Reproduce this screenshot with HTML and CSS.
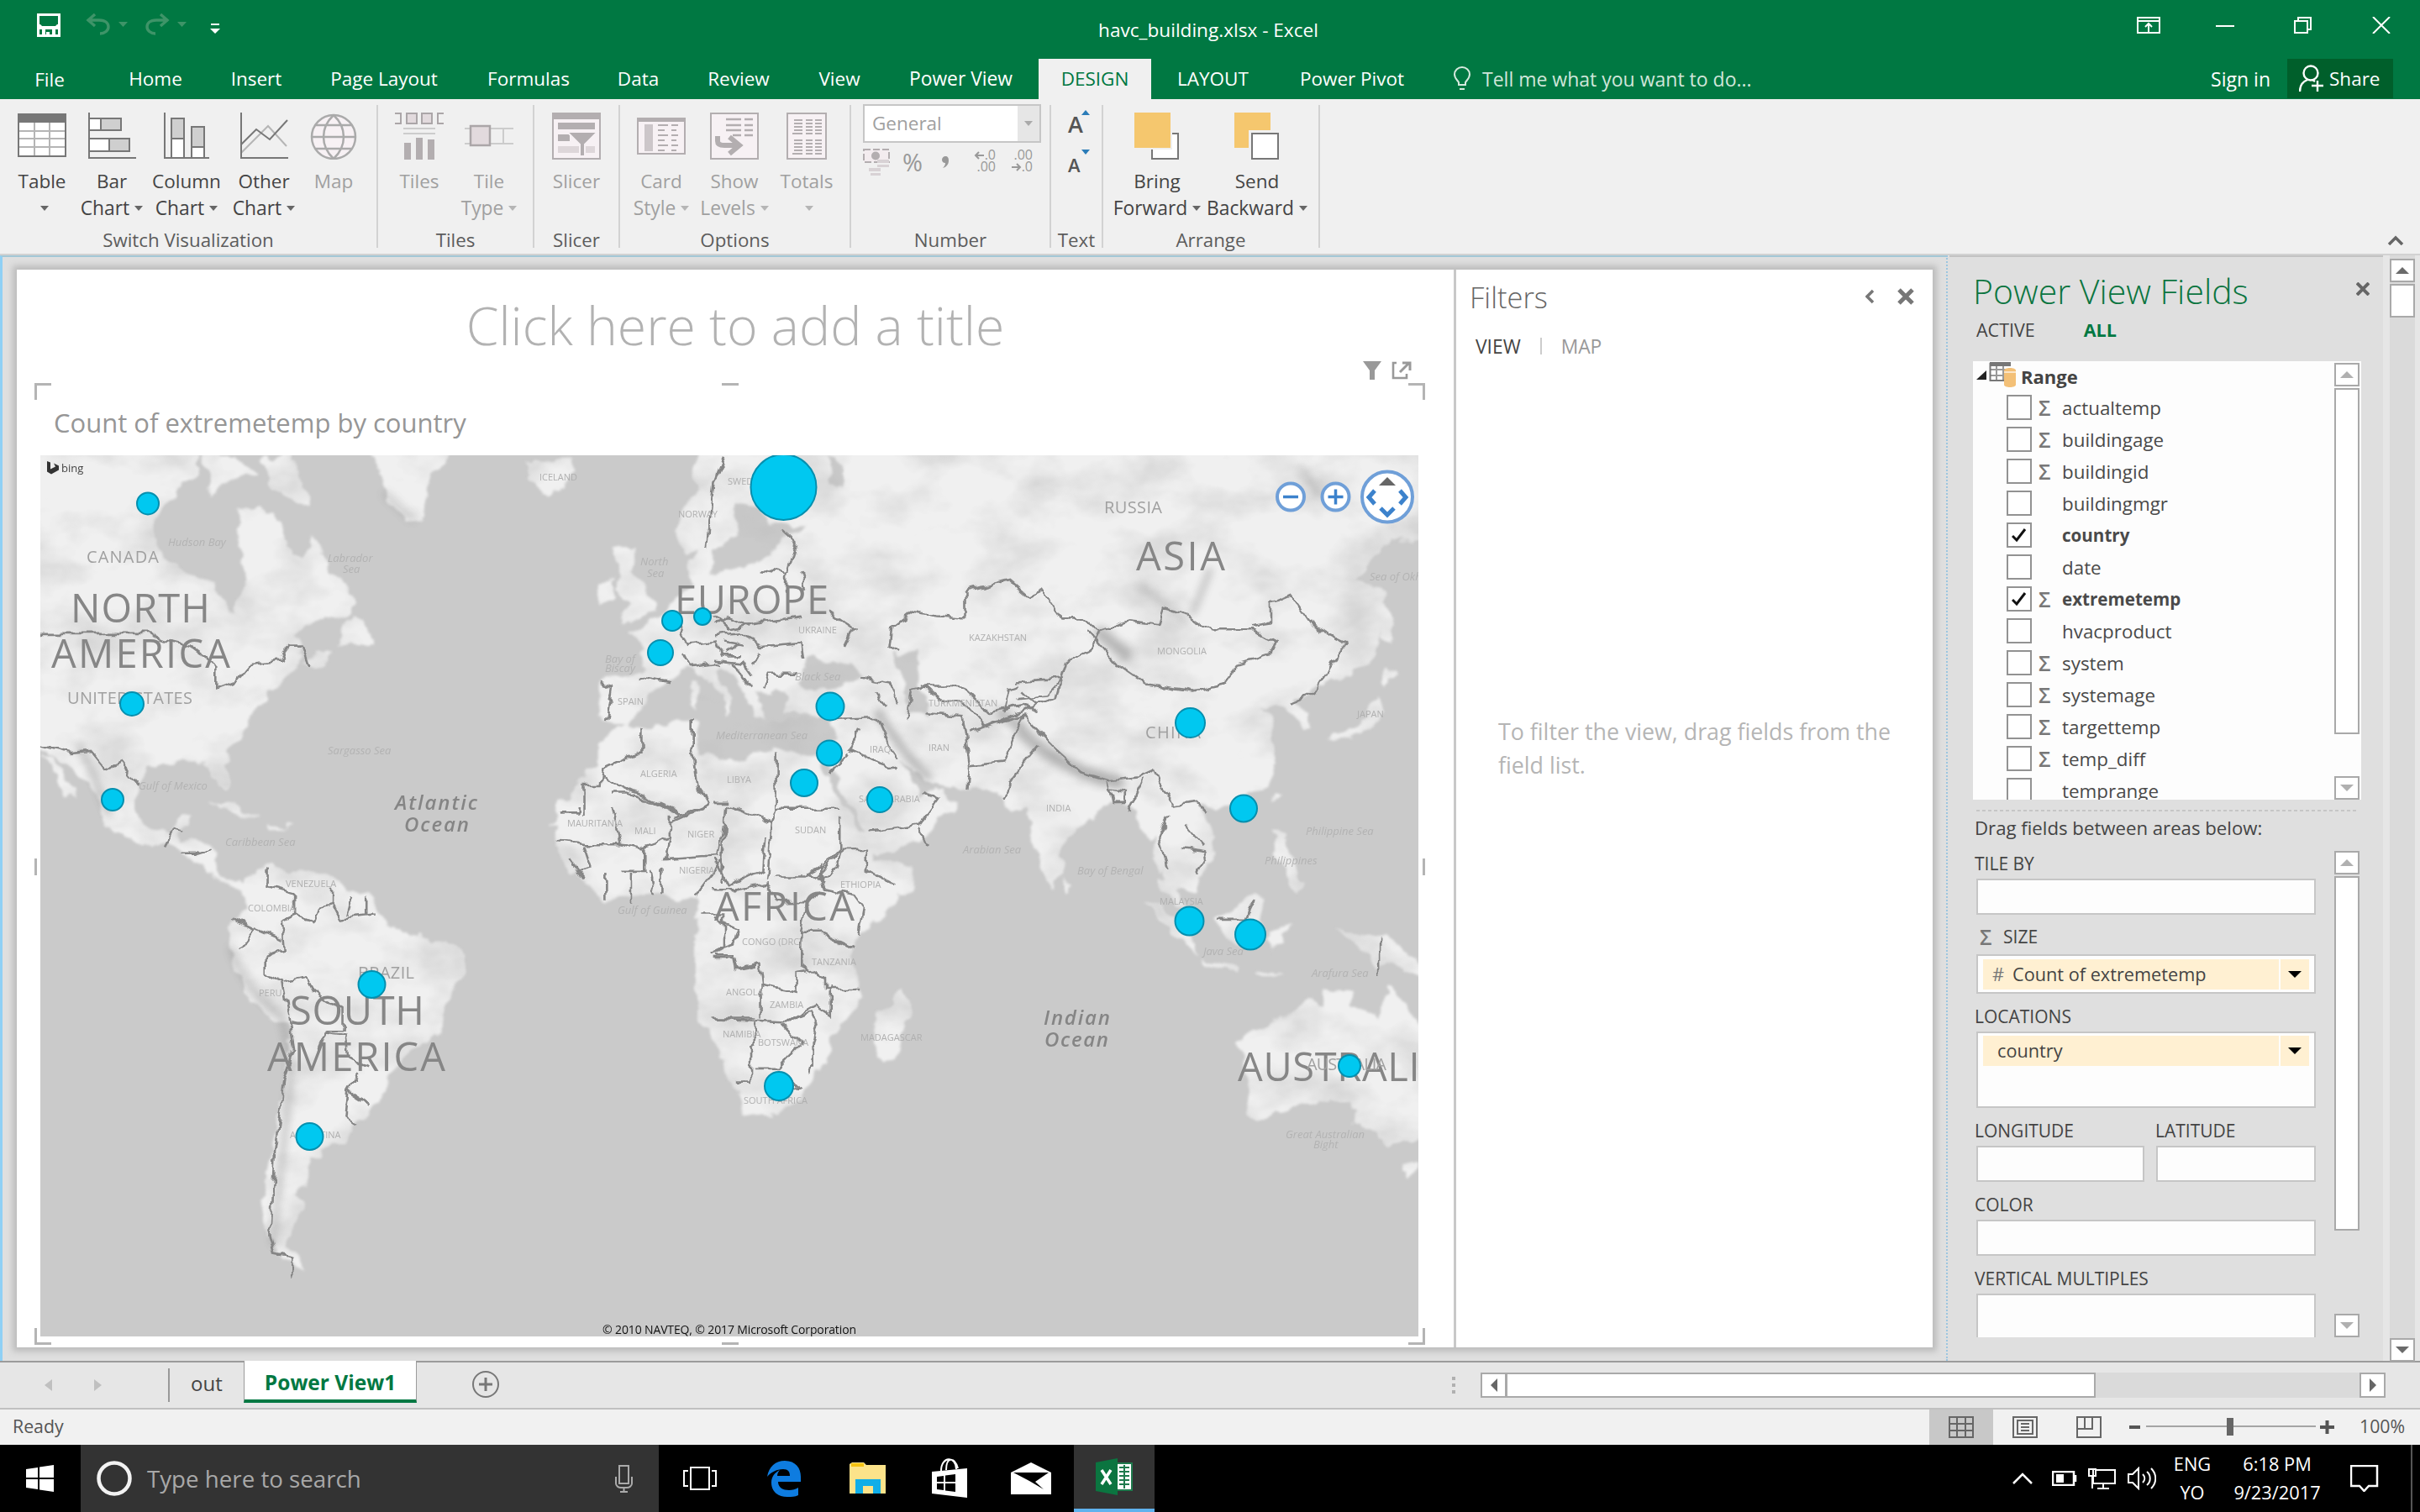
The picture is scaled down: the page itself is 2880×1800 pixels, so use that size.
FILE: index.html
```html
<!DOCTYPE html>
<html lang="en">
<head>
<meta charset="utf-8">
<title>havc_building.xlsx - Excel</title>
<link rel="stylesheet" href="styles.css">
</head>
<body>
<div class="app">
  <header class="titlebar">
    <div class="qat">
      <svg class="i-save" width="28" height="28" viewBox="0 0 28 28"><path d="M1.5 1.5h25v25h-25z" fill="none" stroke="#fff" stroke-width="3"/><path d="M1 13h3l2 2h16l2-2h3v6H1zM6 17h4v9H6zM18 17h4v9h-4zM11 22h4v5h-4z" fill="#fff"/></svg>
      <svg class="i-undo" width="50" height="26" viewBox="0 0 50 26"><path d="M2 8h14c8 0 11 4 11 8s-4 8-10 8M11 1L3 8l8 7" fill="none" stroke="#3e9468" stroke-width="3.4"/><path d="M39 10h11l-5.500 6z" fill="#3e9468"/></svg>
      <svg class="i-redo" width="50" height="26" viewBox="0 0 50 26"><path d="M28 8H14C6 8 3 12 3 16s4 8 10 8M19 1l8 7-8 7" fill="none" stroke="#3e9468" stroke-width="3.4"/><path d="M39 10h11l-5.500 6z" fill="#3e9468"/></svg>
      <svg class="i-more" width="12" height="13" viewBox="0 0 12 13"><path d="M1 0h10v2H1zM0 6h12l-6 6z" fill="#fff"/></svg>
    </div>
    <div class="doc-name">havc_building.xlsx - Excel</div>
    <div class="win-btns">
      <svg class="w-rib" width="28" height="20" viewBox="0 0 28 20"><path d="M1 1h26v18H1zM1 5h26M14 18V8M10 12l4-4 4 4" fill="none" stroke="#fff" stroke-width="2"/></svg>
      <svg width="22" height="20" viewBox="0 0 22 20"><path d="M0 11h22" stroke="#fff" stroke-width="2"/></svg>
      <svg width="22" height="20" viewBox="0 0 22 20"><path d="M1 5h15v14H1zM5 5V1h15v14h-4" fill="none" stroke="#fff" stroke-width="2"/></svg>
      <svg width="22" height="20" viewBox="0 0 22 20"><path d="M1 0l20 20M21 0L1 20" stroke="#fff" stroke-width="2"/></svg>
    </div>
  </header>

  <nav class="tabs">
    <span class="tab file">File</span>
    <span class="tab t-home">Home</span>
    <span class="tab t-insert">Insert</span>
    <span class="tab t-page">Page Layout</span>
    <span class="tab t-form">Formulas</span>
    <span class="tab t-data">Data</span>
    <span class="tab t-rev">Review</span>
    <span class="tab t-view">View</span>
    <span class="tab t-pv">Power View</span>
    <span class="tab active">DESIGN</span>
    <span class="tab t-lay">LAYOUT</span>
    <span class="tab t-pp">Power Pivot</span>
    <span class="tab tell"><svg width="20" height="30" viewBox="0 0 20 30"><path d="M6 22v-3C4 16 1 14 1 9.500a9 8.500 0 0 1 18 0c0 4.500-3 6.500-5 9.500v3zM7 27h6" fill="none" stroke="#d6e9de" stroke-width="2"/></svg>Tell me what you want to do...</span>
    <span class="tab signin">Sign in</span>
    <span class="tab share"><svg width="30" height="34" viewBox="0 0 30 34"><circle cx="14" cy="10" r="8.500" fill="none" stroke="#fff" stroke-width="2.400"/><path d="M1 32c0-8 4-12 9-14M16 18l3 2M22 19v13M15 25h14" fill="none" stroke="#fff" stroke-width="2.400"/></svg>Share</span>
  </nav>

  <section class="ribbon">
    <div class="group g-switch">
      <div class="btns">
        <div class="btn b84"><svg width="58" height="56" viewBox="0 0 58 56"><path d="M1 2h56v50H1z" fill="#fff"/><path d="M1 22h56M1 31h56M1 41h56M20 12v40M38 12v40" stroke="#b5b5b5" stroke-width="2"/><path d="M1 2h56v50H1z" fill="none" stroke="#777" stroke-width="2"/><path d="M0 2h58v10H0z" fill="#777"/></svg><span>Table</span><span><i class="dd"></i></span></div>
        <div class="btn b82"><svg width="58" height="56" viewBox="0 0 58 56"><path d="M2 0v54h56" fill="none" stroke="#777" stroke-width="2"/><path d="M2 7h38v14H2zM2 31h48v15H2z" fill="#fff" stroke="#777" stroke-width="2"/><path d="M16 7h24v14H16zM26 31h24v15H26z" fill="#cfcfcf" stroke="#777" stroke-width="2"/></svg><span>Bar</span><span>Chart<i class="dd"></i></span></div>
        <div class="btn b96"><svg width="54" height="56" viewBox="0 0 54 56"><path d="M1 0v54h53" fill="none" stroke="#777" stroke-width="2"/><path d="M9 7h15v47H9zM33 17h15v37H33z" fill="#fff" stroke="#777" stroke-width="2"/><path d="M9 7h15v24H9zM33 17h15v24H33z" fill="#cfcfcf" stroke="#777" stroke-width="2"/></svg><span>Column</span><span>Chart<i class="dd"></i></span></div>
        <div class="btn b88"><svg width="58" height="56" viewBox="0 0 58 56"><path d="M2 48l32-32 22 24" fill="none" stroke="#b5b5b5" stroke-width="2"/><path d="M2 38l18-18 16 12L57 9M2 0v54h56" fill="none" stroke="#777" stroke-width="2"/></svg><span>Other</span><span>Chart<i class="dd"></i></span></div>
        <div class="btn b78 off"><svg width="56" height="56" viewBox="0 0 56 56"><circle cx="28" cy="29" r="26" fill="#f7f1f4" stroke="#aaa" stroke-width="2.500"/><path d="M2 29h52M7 15h42M7 43h42M28 3c-16 15-16 37 0 52M28 3c16 15 16 37 0 52" fill="none" stroke="#aaa" stroke-width="2.500"/></svg><span>Map</span></div>
      </div>
      <div class="gname">Switch Visualization</div>
    </div>
    <div class="group g-tiles">
      <div class="btns">
        <div class="btn b82 off"><svg width="58" height="56" viewBox="0 0 58 56"><path d="M0 1h7v12H0M58 1h-7v12h7" fill="none" stroke="#aba6a8" stroke-width="2"/><path d="M14 1h12v12H14zM32 1h12v12H32z" fill="#e2dadd" stroke="#aba6a8" stroke-width="2"/><path d="M10 19h38M10 25h38" stroke="#ccc" stroke-width="2"/><path d="M11 36h8v20h-8zM25 30h8v26h-8zM39 32h8v24h-8z" fill="#b3aeb0"/></svg><span>Tiles</span></div>
        <div class="btn b84 off"><svg width="58" height="56" viewBox="0 0 58 56"><path d="M0 19h58M0 37h58M46 19v18" stroke="#ccc" stroke-width="2"/><path d="M7 16h23v23H7z" fill="#e2dadd" stroke="#aba6a8" stroke-width="2.500"/></svg><span>Tile</span><span>Type<i class="dd"></i></span></div>
      </div>
      <div class="gname">Tiles</div>
    </div>
    <div class="group g-slicer">
      <div class="btns">
        <div class="btn b84 off"><svg width="58" height="56" viewBox="0 0 58 56"><path d="M1 1h56v54H1z" fill="#f7f1f4" stroke="#b3aeb0" stroke-width="2"/><path d="M0 0h58v8H0zM7 12h44v8H7zM7 26h14v8H7z" fill="#b3aeb0"/><path d="M7 40h44v8H7z" fill="#ddd6d9"/><path d="M18 23h36L39 38v14h-6V38z" fill="#b3aeb0" stroke="#f7f1f4" stroke-width="2"/></svg><span>Slicer</span></div>
      </div>
      <div class="gname">Slicer</div>
    </div>
    <div class="group g-options">
      <div class="btns">
        <div class="btn b86 off"><svg width="58" height="56" viewBox="0 0 58 56"><path d="M1 7h56v42H1z" fill="#f7f1f4" stroke="#b3aeb0" stroke-width="2"/><path d="M0 6h58v5H0z" fill="#b3aeb0"/><path d="M9 14h10v32H9z" fill="#ccc6c9"/><path d="M25 15h12M41 15h8M25 21h8M41 21h6M25 27h12M41 27h8M25 33h8M41 33h6M25 39h12M41 39h8M25 45h8M41 45h6" stroke="#b3aeb0" stroke-width="2"/></svg><span>Card</span><span>Style<i class="dd"></i></span></div>
        <div class="btn b88 off"><svg width="58" height="56" viewBox="0 0 58 56"><path d="M1 1h56v54H1z" fill="#f7f1f4" stroke="#b3aeb0" stroke-width="2"/><path d="M19 8h18M41 8h10M19 15h18M41 15h10M19 21h18M41 21h10M27 27h10M41 27h10" stroke="#b3aeb0" stroke-width="2.500"/><path d="M9 28v6c0 4 4 5 8 5h18M23 29l12 10-12 10" fill="none" stroke="#b3aeb0" stroke-width="6"/></svg><span>Show</span><span>Levels<i class="dd"></i></span></div>
        <div class="btn b84 off"><svg width="48" height="56" viewBox="0 0 48 56"><path d="M1 1h46v54H1z" fill="#f7f1f4" stroke="#b3aeb0" stroke-width="2"/><path d="M9 9h10M23 9h8M34 9h8M9 13h10M23 13h8M34 13h8M9 17h10M23 17h8M34 17h8M9 21h10M23 21h8M34 21h8M7 25h12M23 25h8M34 25h8M9 33h10M23 33h8M34 33h8M9 37h10M23 37h8M34 37h8M9 41h10M23 41h8M34 41h8M9 45h10M23 45h8M34 45h8M7 49h12M23 49h8M34 49h8" stroke="#b3aeb0" stroke-width="2"/></svg><span>Totals</span><span><i class="dd"></i></span></div>
      </div>
      <div class="gname">Options</div>
    </div>
    <div class="group g-number">
      <div class="num-select"><span>General</span><b><i class="dd"></i></b></div>
      <div class="num-row">
        <svg width="32" height="32" viewBox="0 0 32 32"><path d="M1 1h30v15H1z" fill="#f3ecef" stroke="#b3aeb0" stroke-width="2" stroke-dasharray="8 3"/><circle cx="15" cy="8.500" r="5" fill="#b3aeb0"/><path d="M17 13h14v4H17zM17 19h14v3H17zM7 23h14v4H7zM9 29h12v3H9z" fill="#d8d2d5"/></svg>
        <span class="pct">%</span>
        <svg class="comma" width="10" height="16" viewBox="0 0 10 16"><path d="M5 1c3 0 4 2 4 5 0 5-3 8-7 9 2-2 3-4 3-6-3 0-4-2-4-4s2-4 4-4z" fill="#999"/></svg>
        <span class="dec"><svg width="13" height="10" viewBox="0 0 13 10"><path d="M12 5H2M6 1L2 5l4 4" fill="none" stroke="#999" stroke-width="2"/></svg>.0<br>.00</span>
        <span class="dec">.00<br><svg width="13" height="10" viewBox="0 0 13 10"><path d="M1 5h10M7 1l4 4-4 4" fill="none" stroke="#999" stroke-width="2"/></svg>.0</span>
      </div>
      <div class="gname">Number</div>
    </div>
    <div class="group g-text">
      <div class="grow"><span>A</span><svg width="10" height="6" viewBox="0 0 10 6"><path d="M0 6l5-6 5 6z" fill="#2b7cb8"/></svg></div>
      <div class="shrink"><span>A</span><svg width="10" height="6" viewBox="0 0 10 6"><path d="M0 0h10L5 6z" fill="#2b7cb8"/></svg></div>
      <div class="gname">Text</div>
    </div>
    <div class="group g-arrange">
      <div class="btns">
        <div class="btn b118"><svg width="54" height="56" viewBox="0 0 54 56"><path d="M21 25h31v30H21z" fill="#fff" stroke="#777" stroke-width="2"/><path d="M0 0h43v42H0z" fill="#f5c76e" stroke="#f0f0f0" stroke-width="4" paint-order="stroke"/></svg><span>Bring</span><span>Forward<i class="dd"></i></span></div>
        <div class="btn b120"><svg width="54" height="56" viewBox="0 0 54 56"><path d="M0 0h43v42H0z" fill="#f5c76e"/><path d="M20 24h32v31H20z" fill="#fff" stroke="#f0f0f0" stroke-width="6"/><path d="M21 25h31v30H21z" fill="#fff" stroke="#777" stroke-width="2"/></svg><span>Send</span><span>Backward<i class="dd"></i></span></div>
      </div>
      <div class="gname">Arrange</div>
    </div>
    <div class="ribbon-end"><svg width="20" height="12" viewBox="0 0 20 12"><path d="M2 11l8-8 8 8" fill="none" stroke="#666" stroke-width="3.500"/></svg></div>
  </section>

  <main class="work">
    <div class="view">
      <div class="sheet">
        <section class="canvas">
          <h1 class="ph-title">Click here to add a title</h1>
          <div class="viz">
            <div class="viz-tools">
              <svg width="22" height="22" viewBox="0 0 22 22"><path d="M0 0h22l-8 11v11H8V11z" fill="#999"/></svg>
              <svg width="24" height="22" viewBox="0 0 24 22"><path d="M6 2H2v18h16v-5" fill="none" stroke="#999" stroke-width="2.600"/><path d="M10 13L21 2M13 2h9v9" fill="none" stroke="#999" stroke-width="3"/></svg>
            </div>
            <h2>Count of extremetemp by country</h2>
            <svg class="map" width="1640" height="1049" viewBox="48 543 1640 1049">
              <defs>
                <filter id="terrain" x="0" y="0" width="100%" height="100%">
                  <feTurbulence type="fractalNoise" baseFrequency=".045" numOctaves="3" seed="4" result="n"/>
                  <feDisplacementMap in="SourceGraphic" in2="n" scale="18" xChannelSelector="R" yChannelSelector="G" result="d"/>
                  <feGaussianBlur in="d" stdDeviation="1.500" result="s"/>
                  <feTurbulence type="fractalNoise" baseFrequency=".012 .018" numOctaves="4" seed="9" result="t"/>
                  <feColorMatrix in="t" type="matrix" values="0 0 0 0 .5  0 0 0 0 .5  0 0 0 0 .5  1.200 0 0 0 -.5" result="sh"/>
                  <feComposite in="sh" in2="s" operator="in" result="shade"/>
                  <feMerge><feMergeNode in="s"/><feMergeNode in="shade"/></feMerge>
                </filter>
                <filter id="rough" x="0" y="0" width="100%" height="100%">
                  <feTurbulence type="fractalNoise" baseFrequency=".06" numOctaves="2" seed="4" result="n"/>
                  <feDisplacementMap in="SourceGraphic" in2="n" scale="12" xChannelSelector="R" yChannelSelector="G" result="d"/>
                  <feGaussianBlur in="d" stdDeviation=".7"/>
                </filter>
                <filter id="soft" x="-20%" y="-20%" width="140%" height="140%"><feGaussianBlur stdDeviation="5"/></filter>
              </defs>
              <rect x="48" y="543" width="1640" height="1049" fill="#cacaca"/>
              <g filter="url(#terrain)" fill="#f0f0f0">
                <rect x="48" y="543" width="1640" height="1049" fill="none"/>
                <g transform="matrix(.574 0 0 .4209 0 310)">
                  <path d="M60 530H415L405 610 370 640 350 680 325 720 318 780 340 850 380 880 420 905 450 915 460 960 485 1005 495 960 515 910 505 860 490 820 500 700 530 700 575 720 590 780 600 830 630 840 650 780 690 880 720 930 738 970 720 1010 680 1020 640 1030 610 1060 620 1090 620 1150 600 1180 580 1210 550 1215 540 1250 520 1290 515 1330 470 1390 465 1430 475 1480 468 1500 450 1470 435 1430 380 1415 360 1430 310 1430 285 1490V1600H215L205 1530 165 1460 120 1410 60 1375z"/>
                  <path d="M88 1400l24 12 40 88 5 30-22-18-36-92zM700 1080l30-70 36 45 6 42zM622 1135l30-25 40-2-40 45zM415 556h75l40 50-70 28-20 40-10-60zM545 570l60-30 35 160-40-20-45-40zM770 530H950L900 600 880 660 872 740 840 740 810 700 790 640zM1090 575l90-10 15 35-25 40-40 20-35-40zM1500 530H1600V740L1530 830 1510 890 1480 890 1460 800 1420 830 1400 770 1410 700 1480 630zM1270 820h50l-10 60 30 50 15 50-15 30-50 10 20-40-30-50 8-30zM1240 920l35-20v60l-35 30zM1430 850h25l5 60-30 10z"/>
                  <path d="M1600 890L1440 905 1400 960 1350 1030 1300 1050 1330 1090 1335 1180 1245 1185 1240 1290 1270 1300 1300 1320 1340 1260 1345 1230 1385 1190 1410 1170 1430 1150 1470 1190 1510 1240 1500 1290 1525 1250 1480 1160 1500 1130 1540 1190 1600 1240zM1435 1190l10 0 0 90-15-20zM1460 1280l40 5-10 18z"/>
                  <path d="M1270 1330l20-15 40 15 70-20 55-10 5 30-10 40 50 20 40 20 60-40V1600H1140l60-120 40-50v-60z"/>
                </g>
                <g transform="matrix(.574 0 0 .4209 0 960)">
                  <path d="M210-20L215 50 260 90 310 105 350 110 380 140 400 150 425 180 450 210 480 225 505 235 510 220 480 205 455 205 440 180 445 120 410 105 375 100 370 70 395 50 395 20 370 20 350 70 310 80 285 30V-20zM430-5l50 0 60 40-30 0-40-25zM560 45l42 18-42 5z"/>
                  <path d="M510 200L570 165 600 185 680 190 720 240 780 260 800 340 860 365 920 385 965 430 960 490 920 560 915 640 850 700 810 760 790 820 760 880 725 910 715 950 670 965 665 1000 640 1005 635 1060 610 1100 625 1140 605 1190 595 1240 630 1310 600 1300 570 1250 550 1200 545 1120 560 980 580 860 590 760 600 700 595 620 530 560 490 470 475 400 480 330 510 290 500 240z"/>
                  <path d="M1155-20V100L1165 150 1200 200 1255 275 1290 265 1360 245 1410 275 1440 265 1445 340 1440 370 1470 400 1485 450 1495 520 1475 600 1490 680 1510 770 1535 830 1545 870 1600 880V-20z"/>
                </g>
                <g transform="matrix(.574 0 0 .3954 850 430)">
                  <path d="M-40 260H1500V540H1400L1320 670 1390 690 1385 780 1370 880 1310 950 1270 960 1210 1020 1240 1110 1225 1120 1200 1080 1170 1035 1130 1050 1160 1080 1165 1200 1150 1280 1080 1340 1030 1350 1000 1340 1030 1420 1035 1490 1000 1600 940 1590 920 1430 900 1440 880 1400 860 1330 830 1330 780 1380 720 1450 720 1530 700 1600 670 1500 650 1350 620 1360 590 1310 520 1290 440 1270 380 1190 400 1230 430 1320 470 1290 500 1340 430 1440 340 1490 240 1230 245 1180 250 1130 240 1080 150 1060 145 1000 80 1000 110 1080 85 1070 40 950 0 900-40 880z"/>
                  <path d="M1385 730l25 50-10 80-20-40zM1390 920l32 28-32 42zM1370 1010l22 50-50 70-72 20 10-22 52-18zM1155 1330l10-40 8 10zM1160 1410l20 20 0 60 40 78-20 0-40-80z"/>
                  <path d="M-20 1180L60 1200 90 1160 210 1190 230 1240 280 1380 330 1510 412 1520V1600H-20z"/>
                  <path fill="#cacaca" d="M50 440l40-10 20 60 80 10-50 30-50 85-95 35 5-80 40-40zM172 960l30-70 70 20 40 40-60 40-70-5zM370 880l60-10-10 80 25 130-45-20-10-100zM230 290l40 30 0 60-30-10zM-40 1000l50 40 40 60 110-20 85 10-5 95-100-5-50-15-30 40-100-20z"/>
                </g>
                <g transform="matrix(.574 0 0 .3954 850 1000)">
                  <path d="M-40-20H330V90L410 70 370 200 300 290 280 350 300 430 295 510 240 590 240 650 210 700 180 790 130 830 70 820 40 740 0 600-40 520zM390 450l15 50-35 160-25 15-15-55 10-100 30-20zM660-20h80l-20 70-20 80-20-50zM725 115l17 35-12 18zM920-20h115v80l-35 60-40-80-40 60-10-60zM925 110l40 50 10 50-15-10-30-50zM888 180l42 20 55 70 15 80-40-50zM1005 360l85 20-5 15-75-20zM1040 240l40-30 40-50 20 20-10 80-20 50h-50zM1150 280l50-20-30 30 10 20-20 30zM1280 270l50 20 70 10 55 60 25 60-85-50-20 20-40-70z"/>
                  <path d="M1185 0l10 40 25 90-10 35-25-60-15-80zM1085 620L1110 590 1180 540 1220 485 1260 500 1270 450 1330 460 1320 500 1375 545 1395 440 1430 500 1500 620V900L1400 920 1370 890 1330 850 1320 800 1260 785 1190 820 1130 845 1100 830 1110 760zM1425 970l30 0-15 50zM1120 400l20 0 40 15-50 0z"/>
                </g>
              </g>
              <g filter="url(#soft)" fill="none" stroke="#777" opacity=".45" stroke-linecap="round">
                <path d="M1215 870C1240 900 1290 925 1330 932M1310 755l30 25" stroke-width="16"/>
                <path d="M1045 850c20 30 40 60 60 75M1190 850l30 20" stroke-width="10"/>
                <path d="M275 1130c10 30 30 60 60 80l12 60-8 80-14 130" stroke-width="5"/>
                <path d="M95 890l15 30 20 50M1420 730l20-50" stroke-width="6"/>
                <path d="M460 590l30 28M1360 700l50 40M1550 560l20 30" stroke-width="8" opacity=".6"/>
              </g>
              <g filter="url(#rough)" fill="none" stroke="#858585" stroke-width="2.600">
                <rect x="48" y="543" width="1640" height="1049" stroke="none"/>
                <g transform="matrix(.574 0 0 .4209 0 310)">
                  <path vector-effect="non-scaling-stroke" d="M80 1057H310l20 15 60 20 60 60 0 60 40-20 30-50 60-10 20-40h25l15 60M85 1377l60 20 45-5 30 50 30-20 40 65M1500 560l-20 70-15 180M1320 1180l70 18M1245 1200l25 10-10 90M1330 1330v60l-80 50-5 45h-35v90M1245 1465l180 110M1435 1300v80l10 110 25 50M1270 1510h30l110 58M1470 1540l-70 40M1410 1040l15 50 60-10 10 40 40 0M1480 1030l30-20 50 30M1500 1080l40 10M1415 1110l15 40 60-10M1520 1140l20 50 20 20"/>
                </g>
                <g transform="matrix(.574 0 0 .4209 0 960)">
                  <path vector-effect="non-scaling-stroke" d="M345 115l20-50 15 5M375 135l30 0 35-15M555 170l0 60 55 20v60l40 20 10-40 30-10 15 40 70-10M690 230l0 50M730 260l-10 50M760 255v55M610 310l-25 15 5 80-40 20 0 50 35 20 15 100M480 320l45 30-30 55M525 345l60 35M590 500l45-15 15 40 60 50v60l-30 0-20 60M680 640l35 10 5 60 40 30M740 760l-20 50-5 70 25 25M720 805l45 40M600 600l10 90-20 80-10 110-10 100-5 100-5 130 10 60 35 10v50M1160 20h40V0M1270 0l15 110h-75l-50-10M1210 115l15 60-30 10M1285 110l0 0 50 15 0 60-50 0M1330 120l60-30 0-60M1310 190v80M1345 180l10 70M1370 180v70M1390 50l80-50M1390 90l-10 60 110-10 10-80M1500 150l-60 110M1450 310h50v90l-30 20M1475 430h50l5 30 38-10M1475 600h90M1255 190v80M1180 150l30 60"/>
                </g>
                <g transform="matrix(.574 0 0 .3954 850 430)">
                  <path vector-effect="non-scaling-stroke" d="M370 800l40-45 50 15 60 5 0-80 90-35 40 50 30-20 40 90 50 0 30 35-20 60-50 30-20 110-100 60-50 30-40-70-50-10-30-40-30 10-10 80M370 800l-5 60 20 20M800 815l60-30 60 10 10-50 50 20 50 45h90l45 35-10 40-70 30-30 60-60 20-100-20-60-60-40-70-20-30M1110 800l45-10 0-60 40-25 45 95 70 50-35 80-30 70-50 30M430 980l60 0 30 10 50 70 70-20 30 20M620 970l100-10-30 50-60 10M440 1060l75 10 15 150 70-10 40-140-50 20-60 30M530 1220l-5 70M670 1160l-50 90-20 70M640 1070l60 90 60 80 60 25 60-10 30-20 15 50 30 50M815 1270l10 60 30 0 0-30-40-10M860 1360l30-100M940 1370l-20 60 20 100M950 1340l50-10 20 30M980 1400l35 60M970 1470l50 10-20 70M130 1180v170h130M130 1350l-10 40-95-50M120 1390l-10 170M25 1340l-10 228M260 1380l0 100-50 80M250 1080l90-5 40 130M300 1110l-20 60 60 40 40 20M240 1240l40-60M325 1420l100-20 40-80-35-20M425 1410l15 50M240 760l50 50-20 60M0 770l30 40 70-20 80-20M0 830l50-10 50 40 80-10 5 50M20 880l30-30M80 920l20-40M0 900l60 10 20 40M100 990l10-50 60 0M90 630l60 10 20-90-30-40M150 640l0 60M180 640l10 50M300 950l60 20 20 60M335 1000l20 50"/>
                  <path vector-effect="non-scaling-stroke" d="M600 1060l10-70 20-10M640 1000l30 40M0 1330h30"/>
                </g>
                <g transform="matrix(.574 0 0 .3954 850 1000)">
                  <path vector-effect="non-scaling-stroke" d="M0 60l30 80 70-50 5-90M125 110l60 0 35-30 0 40 35-30 10-60h50l0 60 60 45M260 30l0 0-40 60 10 60 60 20 20 40-10 80M0 150l50 0 60-20 20 60 60 0 30-30M180 280l40 0 70 50M190 200l-10 70 0 110 50 40 0 30h70M0 350h40l5 40 50-20 5 80M100 440l70 20 0-60 20-5M95 440l0 100M0 540l150 10 60-50 30 30 0-90M85 550l0 60-10 10v110l-30 0M80 690l50 0 50-75-40-60M150 550l50-30 15 40-10 60 0 60-10 20M1380 300v110M1040 240l60 0 20-60M0 240l50 30-10 50-40 20M190 100l40 30M205 610l0 80M165 730l10 20-20 10"/>
                </g>
              </g>
              <g class="lbl-lg">
                <text x="84" y="742" textLength="166">NORTH</text><text x="61" y="796" textLength="213">AMERICA</text>
                <text x="803" y="732" textLength="183">EUROPE</text><text x="1352" y="680" textLength="106">ASIA</text>
                <text x="850" y="1097" textLength="167">AFRICA</text><text x="345" y="1221" textLength="160">SOUTH</text><text x="318" y="1276" textLength="212">AMERICA</text>
                <text x="1473" y="1288" textLength="247">AUSTRALIA</text>
              </g>
              <g class="lbl-md">
                <text x="103" y="671" textLength="86">CANADA</text><text x="80" y="839" textLength="149">UNITED STATES</text><text x="1314" y="612" textLength="69">RUSSIA</text><text x="1363" y="880" textLength="66">CHINA</text><text x="426" y="1166" textLength="67">BRAZIL</text><text x="1555" y="1275" textLength="95">AUSTRALIA</text>
              </g>
              <g class="lbl-oc">
                <text x="470" y="965" textLength="98">Atlantic</text><text x="481" y="991" textLength="77">Ocean</text><text x="1242" y="1221" textLength="79">Indian</text><text x="1243" y="1247" textLength="76">Ocean</text>
              </g>
              <g class="lbl-sm">
                <text x="1153" y="764">KAZAKHSTAN</text><text x="1377" y="780">MONGOLIA</text><text x="1245" y="967">INDIA</text><text x="950" y="755">UKRAINE</text><text x="762" y="926">ALGERIA</text><text x="865" y="933">LIBYA</text><text x="946" y="993">SUDAN</text><text x="675" y="985">MAURITANIA</text><text x="755" y="994">MALI</text><text x="818" y="998">NIGER</text><text x="808" y="1041">NIGERIA</text><text x="883" y="1126">CONGO (DRC)</text><text x="966" y="1150">TANZANIA</text><text x="1000" y="1058">ETHIOPIA</text><text x="864" y="1186">ANGOLA</text><text x="916" y="1201">ZAMBIA</text><text x="860" y="1236">NAMIBIA</text><text x="902" y="1246">BOTSWANA</text><text x="885" y="1315">SOUTH AFRICA</text><text x="1024" y="1240">MADAGASCAR</text><text x="340" y="1057">VENEZUELA</text><text x="295" y="1086">COLOMBIA</text><text x="308" y="1187">PERU</text><text x="345" y="1356">ARGENTINA</text><text x="1105" y="895">IRAN</text><text x="1035" y="897">IRAQ</text><text x="1105" y="842">TURKMENISTAN</text><text x="1022" y="956">SAUDI ARABIA</text><text x="642" y="573">ICELAND</text><text x="807" y="617">NORWAY</text><text x="866" y="578">SWEDEN</text><text x="735" y="840">SPAIN</text><text x="1380" y="1078">MALAYSIA</text><text x="1615" y="855">JAPAN</text>
              </g>
              <g class="lbl-sea">
                <text x="200" y="651">Hudson Bay</text><text x="390" y="670">Labrador</text><text x="408" y="683">Sea</text><text x="762" y="674">North</text><text x="770" y="688">Sea</text><text x="390" y="899">Sargasso Sea</text><text x="165" y="941">Gulf of Mexico</text><text x="268" y="1008">Caribbean Sea</text><text x="735" y="1089">Gulf of Guinea</text><text x="852" y="881">Mediterranean Sea</text><text x="946" y="811">Black Sea</text><text x="1146" y="1017">Arabian Sea</text><text x="1282" y="1042">Bay of Bengal</text><text x="1554" y="995">Philippine Sea</text><text x="1630" y="692">Sea of Okhotsk</text><text x="1432" y="1138">Java Sea</text><text x="1561" y="1164">Arafura Sea</text><text x="1530" y="1356">Great Australian</text><text x="1563" y="1368">Bight</text><text x="720" y="790">Bay of</text><text x="720" y="801">Biscay</text><text x="1505" y="1030">Philippines</text>
              </g>
              <g fill="#00c8f0" stroke="#058fae" stroke-width="2">
                <circle cx="176" cy="600.400" r="13"/><circle cx="157" cy="839" r="14"/><circle cx="134" cy="953" r="13"/><circle cx="800" cy="740" r="12"/><circle cx="836" cy="735" r="10"/><circle cx="786" cy="778" r="15"/><circle cx="932.500" cy="581" r="39"/><circle cx="988" cy="842" r="16.500"/><circle cx="987" cy="897.500" r="15"/><circle cx="957" cy="933" r="16"/><circle cx="1047" cy="953" r="15"/><circle cx="1416.500" cy="861.500" r="17.500"/><circle cx="1480" cy="963.500" r="16"/><circle cx="442.500" cy="1173" r="16"/><circle cx="368.500" cy="1354" r="16"/><circle cx="927" cy="1294" r="17"/><circle cx="1415.500" cy="1097.500" r="17"/><circle cx="1488" cy="1113.500" r="18"/><circle cx="1606" cy="1270" r="13"/>
              </g>
              <path d="M56 550l4 1.500v8l6-3-2-4 6 3v5l-9 5-5-3z" fill="#333"/><text class="bing" x="73" y="563">bing</text>
              <g fill="#fff" stroke="#6f9fd8" stroke-width="4">
                <circle cx="1536" cy="592.500" r="16"/><circle cx="1589.500" cy="592.500" r="16"/><circle cx="1651" cy="592.500" r="30"/>
              </g>
              <g fill="none" stroke="#3c82cc" stroke-width="3.500"><path d="M1527 592.500h18M1580.500 592.500h18M1589.500 583.500v18"/><path d="M1636 585l-7 8 7 8M1666 585l7 8-7 8M1643 606l8 8 8-8" stroke-width="5"/></g>
              <path d="M1641 579l10-10 10 10z" fill="#666"/>
              <text class="copy" x="717" y="1589" textLength="302">© 2010 NAVTEQ, © 2017 Microsoft Corporation</text>
            </svg>
            <i class="hd tl"></i><i class="hd tc"></i><i class="hd tr"></i><i class="hd ml"></i><i class="hd mr"></i><i class="hd bl"></i><i class="hd bc"></i><i class="hd br"></i>
          </div>
        </section>
        <aside class="filters">
          <div class="f-head"><span>Filters</span>
            <svg width="10" height="20" viewBox="0 0 10 20"><path d="M9 3L2 10l7 7" fill="none" stroke="#777" stroke-width="3.500"/></svg>
            <svg width="20" height="20" viewBox="0 0 20 20"><path d="M2 2l16 16M18 2L2 18" stroke="#777" stroke-width="5"/></svg>
          </div>
          <div class="f-tabs"><b>VIEW</b><i></i><span>MAP</span></div>
          <p>To filter the view, drag fields from the<br>field list.</p>
        </aside>
      </div>
    </div>
    <div class="splitter"></div>
    <aside class="pane">
      <div class="p-head"><h2>Power View Fields</h2><svg width="16" height="16" viewBox="0 0 16 16"><path d="M1 1l14 14M15 1L1 15" stroke="#666" stroke-width="4"/></svg></div>
      <div class="p-tabs"><span>ACTIVE</span><b>ALL</b></div>
      <div class="list">
        <div class="rows">
          <div class="root"><svg width="48" height="36" viewBox="0 0 48 36"><path d="M0 22L12 11v11z" fill="#222"/><path d="M16 1h24v22H16z" fill="#fff"/><path d="M16 10h24M16 17h24M24 2v21M32 2v21" stroke="#999" stroke-width="2"/><path d="M16 1h25v5H16z" fill="#777"/><path d="M16.500 2v21H34" fill="none" stroke="#777" stroke-width="2"/><path d="M33 11c0-4 14-4 14 0v17c0 4-14 4-14 0z" fill="#f3c077"/><path d="M33 13h14" stroke="#fbe6c8" stroke-width="2"/></svg><b>Range</b></div>
          <div class="row"><i></i><em>Σ</em><span>actualtemp</span></div>
          <div class="row"><i></i><em>Σ</em><span>buildingage</span></div>
          <div class="row"><i></i><em>Σ</em><span>buildingid</span></div>
          <div class="row"><i></i><em></em><span>buildingmgr</span></div>
          <div class="row on"><i><svg width="18" height="18" viewBox="0 0 18 18"><path d="M1 10l5 5L16 2" fill="none" stroke="#111" stroke-width="3"/></svg></i><em></em><span>country</span></div>
          <div class="row"><i></i><em></em><span>date</span></div>
          <div class="row on"><i><svg width="18" height="18" viewBox="0 0 18 18"><path d="M1 10l5 5L16 2" fill="none" stroke="#111" stroke-width="3"/></svg></i><em>Σ</em><span>extremetemp</span></div>
          <div class="row"><i></i><em></em><span>hvacproduct</span></div>
          <div class="row"><i></i><em>Σ</em><span>system</span></div>
          <div class="row"><i></i><em>Σ</em><span>systemage</span></div>
          <div class="row"><i></i><em>Σ</em><span>targettemp</span></div>
          <div class="row"><i></i><em>Σ</em><span>temp_diff</span></div>
          <div class="row"><i></i><em></em><span>temprange</span></div>
        </div>
        <div class="sb"><b class="up lt"></b><b class="thumb t1"></b><b class="down lt"></b></div>
      </div>
      <div class="dash"></div>
      <div class="drag">Drag fields between areas below:</div>
      <div class="areas">
        <div class="wells">
          <label class="l1">TILE BY</label><div class="well w43"></div>
          <label class="l2"><em>Σ</em>SIZE</label><div class="well w47"><div class="chip"><span><u>#</u>Count of extremetemp</span><b></b></div></div>
          <label class="l3">LOCATIONS</label><div class="well w91"><div class="chip"><span class="ind">country</span><b></b></div></div>
          <div class="pair"><div class="pa"><label>LONGITUDE</label><div class="well w43"></div></div><div class="pb"><label>LATITUDE</label><div class="well w43"></div></div></div>
          <label class="l5">COLOR</label><div class="well w43"></div>
          <label class="l5">VERTICAL MULTIPLES</label><div class="well w52"></div>
        </div>
        <div class="sb sb2"><b class="up lt"></b><b class="thumb t2"></b><b class="down lt"></b></div>
      </div>
    </aside>
    <div class="rail"><div class="sb"><b class="up"></b><b class="thumb t3"></b><b class="down"></b></div></div>
  </main>

  <footer class="sheetbar">
    <i class="arr la"></i><i class="arr ra"></i>
    <span class="out">out</span><b class="cur">Power View1</b>
    <svg class="add" width="34" height="34" viewBox="0 0 34 34"><circle cx="17" cy="17" r="15" fill="none" stroke="#777" stroke-width="2"/><path d="M17 9v16M9 17h16" stroke="#777" stroke-width="3"/></svg>
    <i class="dots"></i>
    <div class="hs"><b class="left"></b><b class="hthumb"></b><b class="right"></b></div>
  </footer>
  <footer class="status">
    <span class="ready">Ready</span>
    <span class="vb on"><svg width="30" height="26" viewBox="0 0 30 26"><path d="M1 1h28v24H1zM1 9h28M1 17h28M10 1v24M20 1v24" fill="none" stroke="#666" stroke-width="2"/></svg></span>
    <span class="vb"><svg width="30" height="26" viewBox="0 0 30 26"><path d="M1 1h28v24H1zM6 5h18v16H6zM10 9h10M10 13h10M10 17h10" fill="none" stroke="#666" stroke-width="2"/></svg></span>
    <span class="vb"><svg width="30" height="26" viewBox="0 0 30 26"><path d="M1 1h28v24H1zM1 15h18V1M10 1v14" fill="none" stroke="#666" stroke-width="2"/></svg></span>
    <svg class="zoom" width="250" height="26" viewBox="0 0 250 26"><path d="M0 13h13M227 13h17M235.500 5v16" stroke="#555" stroke-width="4"/><path d="M20 12h202" stroke="#a5a5a5" stroke-width="2"/><path d="M116 2h8v21h-8z" fill="#666"/></svg>
    <span class="pc">100%</span>
  </footer>
  <footer class="taskbar">
    <span class="start"><svg width="34" height="32" viewBox="0 0 34 32"><path d="M0 5l14-2v12H0zM16 2.500L33 0v15H16zM0 17h14v12L0 27zM16 17h17v15l-17-2.500z" fill="#fff"/></svg></span>
    <div class="search"><svg width="44" height="44" viewBox="0 0 44 44"><circle cx="22" cy="22" r="18.500" fill="none" stroke="#f2f2f2" stroke-width="4.500"/></svg><span>Type here to search</span>
      <svg class="mic" width="24" height="34" viewBox="0 0 24 34"><path d="M6 2h11v21H6zM2 15v8c0 3 3 5 6 5h7c3 0 6-2 6-5v-8M11.500 28v5M7 33h9" fill="none" stroke="#aaa" stroke-width="2"/></svg></div>
    <span class="tk k1"><svg width="40" height="28" viewBox="0 0 40 28"><path d="M9 1h22v26H9zM6 5H1v18h5M34 5h5v18h-5" fill="none" stroke="#fff" stroke-width="2"/></svg></span>
    <span class="tk k2"><svg width="42" height="44" viewBox="0 0 42 44"><path d="M1 20C3 8 11 1 22 1c13 0 19 9 19 19v6H14c0 7 6 10 13 10 4 0 8-1 11-3v9c-4 2-8 2-13 2C13 44 6 37 6 27c0-7 4-12 10-15-2 2-3 5-3 7h15c0-5-2-8-8-8C12 11 5 15 1 20z" fill="#0e7ce0"/></svg></span>
    <span class="tk k2"><svg width="44" height="38" viewBox="0 0 44 38"><path d="M0 2l3-2h14l3 3h23v34H0z" fill="#fce38a"/><path d="M2 1h15v4H2z" fill="#f5c211"/><path d="M7 20h30v17h-9v-9H16v9H7z" fill="#10aee8"/></svg></span>
    <span class="tk k2"><svg width="44" height="48" viewBox="0 0 44 48"><path d="M1 16l42-4v35L1 42z" fill="#fff"/><path d="M12 15c0-18 18-18 18-2M18 14c0-16 10-16 14-2" fill="none" stroke="#fff" stroke-width="2"/><path d="M7 22l8-1v7H7zM17 20.500l12-1.500v9H17zM7 30h8v8l-8-1zM17 30h12v10l-12-1.500z" fill="#000"/></svg></span>
    <span class="tk k2"><svg width="48" height="38" viewBox="0 0 48 38"><path d="M0 12L24 0l24 12v26H0z" fill="#fff"/><path d="M3 12h42L29 23l10 9-17-10z" fill="#000"/></svg></span>
    <span class="tk xl"><svg width="44" height="44" viewBox="0 0 44 44"><path d="M22 6h21v32H22z" fill="#fff" stroke="#1f7a4d" stroke-width="2"/><path d="M28 11h12M28 16h12M28 21h12M28 26h12M28 31h12M34 8v28" stroke="#1f7a4d" stroke-width="2"/><path d="M0 5l26-5v44L0 39z" fill="#0b7540"/><path d="M7 14l11 17M18 14L7 31" stroke="#fff" stroke-width="3.500"/></svg></span>
    <div class="tray">
      <svg class="s1" width="26" height="14" viewBox="0 0 26 14"><path d="M2 13L13 2l11 11" fill="none" stroke="#fff" stroke-width="2.500"/></svg>
      <svg class="s2" width="30" height="18" viewBox="0 0 30 18"><path d="M1 1h25v16H1zM28 5v8" fill="none" stroke="#fff" stroke-width="2.500"/><path d="M5 4h9v10H5z" fill="#fff"/></svg>
      <svg class="s2" width="34" height="26" viewBox="0 0 34 26"><path d="M10 3h22v16H6V3M1 2h8v8H1zM18 19v6M11 25h14M5 10v15" fill="none" stroke="#fff" stroke-width="2"/></svg>
      <svg class="s2" width="34" height="28" viewBox="0 0 34 28"><path d="M1 9h5l7-7v24l-7-7H1zM18 9c3 3 3 7 0 10M23 6c5 4 5 12 0 16M28 2c7 7 7 17 0 24" fill="none" stroke="#fff" stroke-width="2"/></svg>
      <div class="lang">ENG<br>YO</div>
      <div class="clock">6:18 PM<br>9/23/2017</div>
      <svg class="s3" width="34" height="32" viewBox="0 0 34 32"><path d="M1 1h31v24H22l-5.500 6-5.500-6H1z" fill="none" stroke="#fff" stroke-width="2.500"/></svg>
      <i></i>
    </div>
  </footer>
</div>
</body>
</html>
```
FILE: styles.css
```css
*{box-sizing:border-box}
body{margin:0;background:#000;font-family:"Open Sans","Noto Sans",sans-serif;font-size:22.5px;color:#444;white-space:nowrap}
svg{display:block;flex:none}
h1,h2,p{margin:0;font-weight:400}
i,em,u{font-style:normal;text-decoration:none}
.app{width:2880px;height:1800px;display:flex;flex-direction:column;overflow:hidden}

.titlebar{height:70px;background:#007842;display:grid;grid-template-columns:1306px 264px 1fr;color:#fff;flex:none}
.qat{display:flex;padding:16px 0 0 44px}
.i-undo{margin-left:30px}.i-redo{margin-left:20px}.i-more{margin:12px 0 0 28px}
.doc-name{padding-top:19px;line-height:34px;font-size:22.6px;text-align:center}
.win-btns{display:flex;padding:20px 35px 0 0;justify-content:flex-end;gap:71px}
.w-rib{margin-right:-5px}

.tabs{height:48px;background:#007842;display:flex;color:#fff;line-height:48px;flex:none}
.tab{flex:none;text-align:center}
.file{width:118px;padding-top:1px}
.t-home{width:134px}.t-insert{width:106px}.t-page{width:198px}.t-form{width:146px}.t-data{width:115px}.t-rev{width:124px}.t-view{width:116px}.t-pv{width:179px;padding-right:6px;font-size:22.800px}
.active{width:134px;background:#f0f0f0;color:#007842}
.t-lay{width:147px}.t-pp{width:184px}
.tell{width:874px;display:flex;align-items:center;gap:14px;color:#d0e6da;padding-left:29px;font-size:23px}
.signin{width:147px;text-align:right;padding-right:20px;font-size:23px}
.share{width:126px;height:47px;background:#005f2b;display:flex;align-items:center;gap:6px;padding-left:14px}

.ribbon{height:186px;background:#f0f0f0;border-bottom:2px solid #d2d2d2;display:flex;flex:none}
.group{height:184px;display:flex;flex-direction:column;position:relative;padding-top:16px;border-right:2px solid transparent;border-image:linear-gradient(#f0f0f0 0 8px,#d2d2d2 8px 176px,#f0f0f0 176px) 1}
.g-switch{width:450px}.g-tiles{width:186px}.g-slicer{width:102px}.g-options{width:275px}.g-number{width:238px}.g-text{width:62px}.g-arrange{width:258px}
.btns{display:flex;height:134px;padding-left:8px}
.g-tiles .btns,.g-slicer .btns{padding-left:8px}
.g-options .btns{padding-left:6px}
.g-arrange .btns{padding-left:5px}
.btn{display:flex;flex-direction:column;align-items:center;flex:none;line-height:32px}
.btn svg{margin-bottom:10px}
.btn span{height:32px;display:flex;align-items:center}
.b78{width:78px}.b82{width:82px}.b84{width:84px}.b86{width:86px}.b88{width:88px}.b96{width:96px}.b118{width:118px}.b120{width:120px}
.dd{border:5px solid transparent;border-top:6px solid #666;border-bottom:0;margin-left:8px;margin-right:-2px;width:0;height:0;flex:none}
.btn span>.dd:only-child{margin:0}
.btn span:has(.dd){font-size:22.800px}
.btn span .dd:first-child:last-child{margin-left:6px}
.off{color:#a0a0a0}.off .dd{border-top-color:#b5b5b5}
.gname{line-height:34px;text-align:center;font-size:22.300px;color:#5c5c5c;margin-top:auto;height:33px}
.num-select{width:212px;height:46px;margin:-10px 0 0 14px;border:2px solid #c6c6c6;background:#fff;display:flex;line-height:42px;color:#a0a0a0;padding-left:9px;flex:none}
.num-select b{margin-left:auto;width:26px;background:#e6e6e6;display:flex;align-items:center;justify-content:center}
.num-select .dd{margin:0;border-top-color:#aaa}
.num-row{display:flex;padding:7px 0 0 14px;color:#999;height:42px}
.pct{font-size:29px;line-height:32px;margin-left:15px}
.comma{margin:8px 0 0 22px}
.dec{font-size:16px;line-height:14px;text-align:right;margin-left:23px;width:32px}
.dec+.dec{margin-left:12px}
.dec svg{display:inline-block}
.g-text{padding-top:9px}
.grow,.shrink{display:flex;padding-left:20px;height:48px;font-weight:600;font-size:27px;line-height:42px;color:#555}
.shrink{font-size:22px;line-height:42px}
.grow svg{margin:4px 0 0 -2px}.shrink svg{margin:3px 0 0 1px}
.ribbon-end{flex:1;display:flex;justify-content:flex-end;align-items:flex-end;padding:0 19px 10px 0}

.work{height:1316px;display:flex;background:#dfdfdf;flex:none}
.view{width:2316px;height:1316px;border-top:2px solid #a3c7d6;border-left:3px solid #8fd0f5;padding:15px 0 0 17px}
.sheet{width:2280px;height:1283px;display:flex;background:#c8c8c8;gap:3px;box-shadow:0 0 7px 5px #bdbdbd}
.canvas{width:1710px;background:#fff;padding-top:26px}
.ph-title{font-size:62.500px;font-weight:300;line-height:80px;height:80px;text-align:center;color:#b2b2b2}
.viz{position:relative;margin:3px 0 0 20px;width:1656px}
.viz-tools{display:flex;gap:12px;justify-content:flex-end;padding:0 16px 0 0}
.viz h2{font-size:31px;line-height:44px;height:90px;padding:29px 0 0 24px;color:#969696}
.map{margin-left:8px}
.lbl-lg{font-size:47px;font-weight:500;fill:#868686}.lbl-md{font-size:20px;fill:#a0a0a0}.lbl-oc{font-size:24px;font-style:italic;font-weight:600;fill:#858585}
.lbl-sm{font-size:11px;fill:#b0b0b0}.lbl-sea{font-size:13px;font-style:italic;fill:#b3b3b3}
.bing{font-size:13px;fill:#444}.copy{font-size:14px;fill:#111}
.hd{position:absolute;width:20px;height:20px;border:0 solid #b4b4b4}
.tl{left:1px;top:26px;border-width:3px 0 0 3px}.tr{right:0;top:26px;border-width:3px 3px 0 0}
.tc{left:819px;top:26px;border-top-width:3px}.bc{left:819px;bottom:-10px;border-bottom-width:3px}
.ml{left:1px;top:592px;border-left-width:3px}.mr{right:0;top:592px;border-right-width:3px}
.bl{left:1px;bottom:-10px;border-width:0 0 3px 3px}.br{right:0;bottom:-10px;border-width:0 3px 3px 0}
.filters{flex:1;background:#fff;padding:12px 22px 0 16px}
.f-head{display:flex;align-items:center;height:40px;font-size:34.500px;color:#777}
.f-head svg:nth-of-type(1){margin-left:auto}.f-head svg+svg{margin-left:28px}
.f-head span{font-weight:300;color:#666}
.f-tabs{display:flex;align-items:center;height:30px;margin:24px 0 0 7px;font-size:22.800px;color:#999}
.f-tabs b{font-weight:400;color:#444}.f-tabs i{width:2px;height:20px;background:#ccc;margin:0 23px}
.filters p{margin:424px 0 0 34px;font-size:26.800px;line-height:40px;color:#b5b5b5}
.splitter{width:4px;border-left:2px dotted #9cc6e0}
.pane{width:516px;padding:17px 0 0 28px;border-top:2px solid #c3c3c3}
.p-head{display:flex;height:46px;align-items:center}
.p-head h2{font-size:41px;font-weight:300;color:#0b7540;flex:1}
.p-head svg{margin:-4px 16px 0 0}
.p-tabs{display:flex;height:30px;margin:9px 0 0 4px;line-height:30px;font-size:21.5px}
.p-tabs b{color:#007842;margin-left:58px}
.list{width:462px;height:522px;margin-top:22px;background:#fdfdfd;display:flex;overflow:hidden}
.rows{width:430px}
.root{height:36px;display:flex;align-items:center;padding-left:4px;gap:5px;font-size:22px}
.row{height:38px;display:flex;align-items:center;padding-left:40px;font-size:22.400px;color:#4a4a4a}
.row i{width:30px;height:30px;border:2px solid #929292;background:#fff;display:flex;align-items:center;justify-content:center;flex:none}
.row em,.l2 em{width:28px;margin-left:8px;font-size:25px;font-weight:600;color:#777}
.row.on span{font-weight:700;font-size:20.600px}
.sb{width:30px;display:flex;flex-direction:column;padding-top:2px;position:relative}
.sb b{width:30px;border:2px solid #a9a9a9;background:#fff;flex:none;display:flex;align-items:center;justify-content:center}
.up,.down{height:28px}
.up:after,.down:after{content:"";border:8px solid transparent;border-top:0;border-bottom:8px solid #6b6b6b}
.sb .down:after{border-bottom:0;border-top:8px solid #6b6b6b}
.sb .up.lt:after{border-bottom-color:#b0b0b0}.sb .down.lt:after{border-top-color:#b0b0b0}
.thumb{margin-top:2px}.down{margin-top:auto}
.t1{height:412px}.t2{height:422px}.t3{height:40px}
.dash{height:2px;width:452px;margin:12px 0 0 4px;background:repeating-linear-gradient(90deg,#c6c6c6 0 4px,transparent 4px 7px)}
.drag{line-height:34px;margin:3px 0 0 2px;font-size:22.200px}
.areas{display:flex;height:580px;margin-top:9px;overflow:hidden}
.wells{width:430px;font-size:21px}
.wells label{display:block;line-height:30px;height:30px;padding-left:2px}
.well{border:2px solid #c6c6c6;background:#fdfdfd;width:404px;margin-left:4px}
.w43{height:43px}.w47{height:47px;padding:4px 6px}.w91{height:91px;padding:3px 6px}.w52{height:54px;border-bottom:0}
.l1{margin:1px 0 3px}
.wells .l2{margin:11px 0 6px;display:flex;align-items:center;padding-left:0}
.l3{margin:12px 0 3px}
.pair{display:flex;margin-top:12px}.pair label{margin-bottom:3px}
.pa{width:217px}.pa .well{width:200px}.pb label{padding-left:0}.pb .well{width:190px;margin-left:1px}
.l5{margin:12px 0 3px}
.chip{display:flex;gap:2px;height:36px;line-height:36px;font-size:21.700px}
.chip span{background:#fff0d2;width:352px;padding-left:11px}.chip .ind{padding-left:17px}
.chip u{margin-right:10px;color:#777}
.chip b{width:34px;background:#fff0d2;display:flex;align-items:center;justify-content:center}
.chip b:after{content:"";border:8px solid transparent;border-top:8px solid #000;border-bottom:0}
.sb2{padding-top:1px}
.rail{width:44px;background:#e6e6e6;padding-left:8px}
.rail .sb{height:1317px;background:#dadada;padding-top:4px}

.sheetbar{height:58px;background:#e6e6e6;border-top:2px solid #9b9b9b;border-bottom:2px solid #c0c0c0;display:flex;align-items:center;flex:none}
.arr{border:7px solid transparent;width:0;height:0;flex:none}
.la{border-right:9px solid #c0c0c0;border-left:0;margin-left:53px}.ra{border-left:9px solid #c0c0c0;border-right:0;margin-left:50px}
.out{border-left:2px solid #999;height:40px;line-height:36px;margin-left:79px;width:90px;padding-left:25px;font-size:24px}
.cur{height:50px;align-self:flex-start;margin-top:-2px;width:206px;background:#fff;border:1px solid #9b9b9b;border-width:0 1px 4px;border-bottom-color:#007842;color:#007842;text-align:center;line-height:52px;font-size:24.500px}
.add{margin-left:65px;margin-top:-2px}
.dots{width:4px;height:20px;margin-left:1133px;background:repeating-linear-gradient(#b0b0b0 0 4px,transparent 4px 8px)}
.hs{display:flex;margin-left:30px;width:1077px;height:30px;background:#dadada}
.hs b{border:2px solid #a9a9a9;background:#fff;display:flex;align-items:center;justify-content:center}
.left,.right{width:31px}.hthumb{width:702px;margin-left:-1px}.right{margin-left:auto}
.left:after{content:"";border:8px solid transparent;border-right:8px solid #666;border-left:0}
.right:after{content:"";border:8px solid transparent;border-left:8px solid #666;border-right:0}

.status{height:42px;background:#f1f1f1;display:flex;align-items:center;flex:none;font-size:21.300px;line-height:36px;color:#555}
.ready{width:2296px;padding:0 0 2px 15px}
.vb{width:76px;height:42px;display:flex;align-items:center;justify-content:center}
.vb.on{background:#c8c8c8}
.zoom{margin-left:10px}.pc{margin-left:24px;padding-bottom:2px}

.taskbar{height:80px;background:#000;display:flex;flex:none;color:#fff}
.start{width:96px;display:flex;align-items:center;padding-left:31px}
.search{width:688px;background:#333;display:flex;align-items:center;padding-left:18px;color:#a8a8a8;font-size:27.700px}
.search span{margin-left:17px}.mic{margin-left:auto;margin-right:29px}
.tk{display:flex;align-items:center;justify-content:center}
.k1{width:98px}.k2{width:97px}.k1+.k2{width:102px}
.xl{width:96px;background:#333;border-bottom:4px solid #5fb2ee;margin-left:3px}
.tray{margin-left:auto;display:flex;align-items:center;line-height:34px;text-align:center;font-size:21.800px}
.s1{margin-right:22px}.s2{margin-right:13px}
.lang{width:60px}.clock{width:124px;margin:0 25px 0 9px}
.s3{margin-right:38px}
.tray i{width:2px;height:80px;background:#555;margin-right:9px}
```
